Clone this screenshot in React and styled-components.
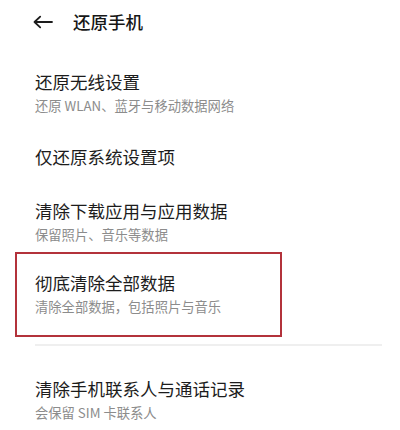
import React from "react";
import styled, { createGlobalStyle } from "styled-components";

const GlobalStyle = createGlobalStyle`
  html, body {
    margin: 0;
    padding: 0;
    background: #ffffff;
  }
  body {
    font-family: "Noto Sans CJK SC", "Noto Sans", "Liberation Sans", sans-serif;
    color: #1c1c1c;
  }
`;

const Page = styled.div`
  width: 400px;
  height: 430px;
  overflow: hidden;
  background: #fff;
`;

const Header = styled.header`
  height: 44px;
  display: flex;
  align-items: center;
  padding-left: 33px;
  box-sizing: border-box;
`;

const BackButton = styled.button`
  display: flex;
  align-items: center;
  padding: 0;
  margin: 0;
  border: none;
  background: none;
  width: 20px;
  height: 14px;
  color: #1c1c1c;
  cursor: pointer;
`;

const Title = styled.h1`
  margin: 0 0 0 20px;
  font-size: 17.5px;
  line-height: 24px;
  font-weight: 500;
  color: #161616;
`;

const List = styled.div`
  display: flex;
  flex-direction: column;
`;

const Row = styled.div`
  padding: ${(p) => p.$pt}px 0 ${(p) => p.$pb}px 35px;
  display: flex;
  flex-direction: column;
  gap: 2px;
`;

const Highlight = styled.div`
  margin-left: 15px;
  width: 267px;
  box-sizing: border-box;
  border: 2px solid #b3323b;
  padding: 17px 0 18px 18px;
  display: flex;
  flex-direction: column;
  gap: 2px;
`;

const ItemTitle = styled.div`
  font-size: 17.5px;
  line-height: 24px;
  color: #1c1c1c;
  white-space: nowrap;
`;

const ItemSub = styled.div`
  font-size: 13.3px;
  line-height: 20px;
  color: #8c8c8c;
  white-space: nowrap;
`;

const Divider = styled.hr`
  margin: 7px 18px 0 35px;
  border: none;
  height: 2px;
  background: #efefef;
`;

const BackArrow = () => (
  <svg width="20" height="14" viewBox="0 0 20 14" fill="none">
    <path
      d="M1.5 7H19M7.2 1.6L1.5 7l5.7 5.4"
      stroke="currentColor"
      strokeWidth="1.8"
      strokeLinecap="round"
      strokeLinejoin="round"
    />
  </svg>
);

const App = () => {
  return (
    <Page>
      <GlobalStyle />
      <Header>
        <BackButton aria-label="返回">
          <BackArrow />
        </BackButton>
        <Title>还原手机</Title>
      </Header>
      <List>
        <Row $pt={26} $pb={14}>
          <ItemTitle>还原无线设置</ItemTitle>
          <ItemSub>还原 WLAN、蓝牙与移动数据网络</ItemSub>
        </Row>
        <Row $pt={15} $pb={15}>
          <ItemTitle>仅还原系统设置项</ItemTitle>
        </Row>
        <Row $pt={15} $pb={7}>
          <ItemTitle>清除下载应用与应用数据</ItemTitle>
          <ItemSub>保留照片、音乐等数据</ItemSub>
        </Row>
        <Highlight>
          <ItemTitle>彻底清除全部数据</ItemTitle>
          <ItemSub>清除全部数据，包括照片与音乐</ItemSub>
        </Highlight>
        <Divider />
        <Row $pt={31} $pb={0}>
          <ItemTitle>清除手机联系人与通话记录</ItemTitle>
          <ItemSub>会保留 SIM 卡联系人</ItemSub>
        </Row>
      </List>
    </Page>
  );
};

export default App;
